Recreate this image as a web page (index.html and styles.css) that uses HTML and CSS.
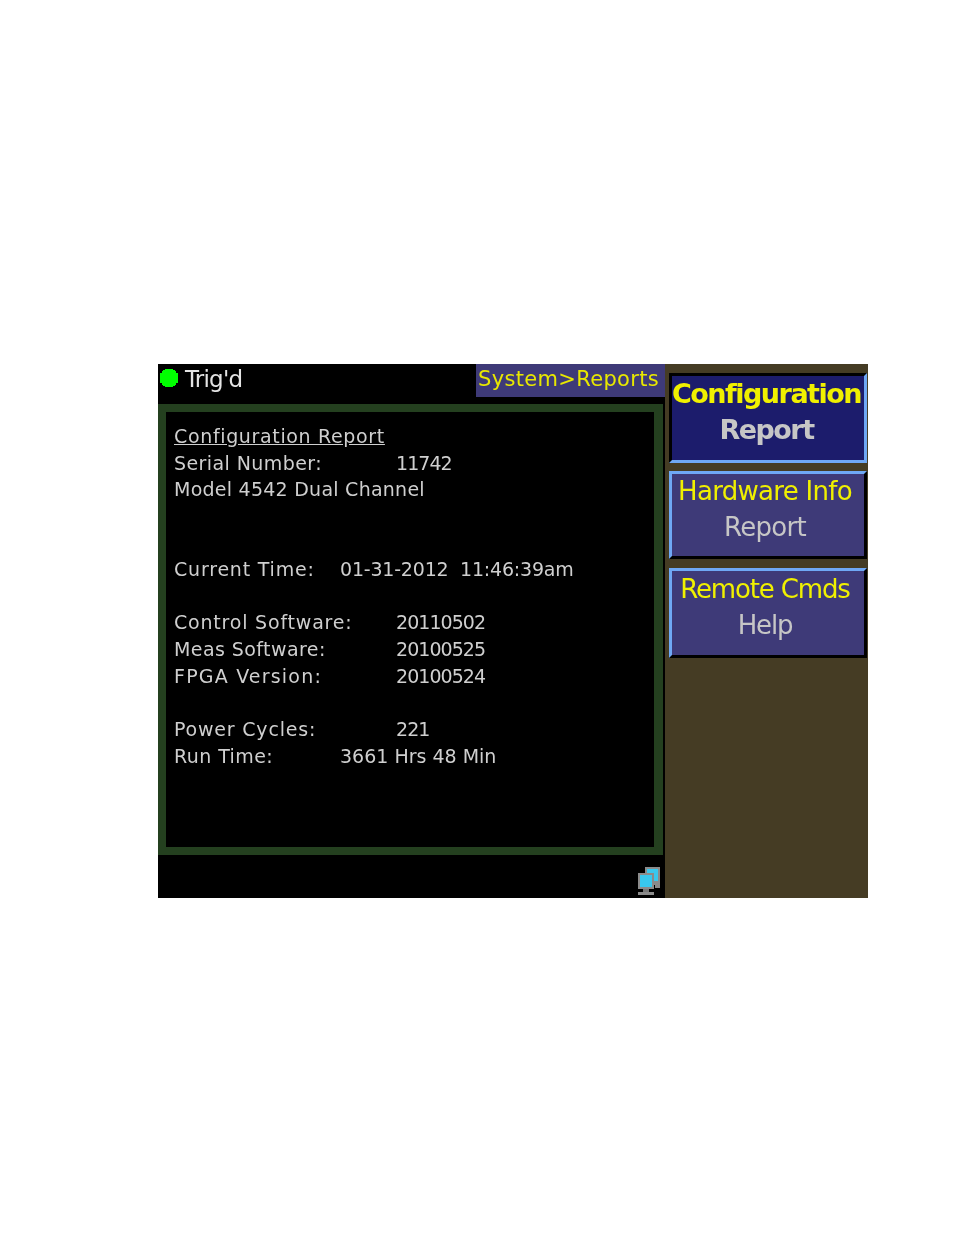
FILE: index.html
```html
<!DOCTYPE html>
<html lang="en">
<head>
<meta charset="utf-8">
<title>System Reports</title>
<link rel="stylesheet" href="styles.css">
</head>
<body>
<div class="screen">
  <main class="display">
    <header class="topbar">
      <div class="status">
        <svg class="led" width="20" height="22" viewBox="0 0 20 22"><path d="M6 1h8v1h2v1h1v2h2v10h-2v2h-1v1h-2v1H6v-1H4v-1H3v-2H1V5h2V3h1V2h2z" fill="#00ff00"/></svg>
        <span>Trig'd</span>
      </div>
      <div class="crumb">System&gt;Reports</div>
    </header>
    <section class="frame">
      <div class="report">
        <div class="row title"><u>Configuration Report</u></div>
        <div class="row"><span class="label sp-serial">Serial Number:</span><span class="val far">11742</span></div>
        <div class="row sp-model">Model 4542 Dual Channel</div>
        <div class="row"></div>
        <div class="row"></div>
        <div class="row"><span class="label sp-wide">Current Time:</span><span class="val pre">01-31-2012  11:46:39am</span></div>
        <div class="row"></div>
        <div class="row"><span class="label sp-wide">Control Software:</span><span class="val far">20110502</span></div>
        <div class="row"><span class="label sp-serial">Meas Software:</span><span class="val far">20100525</span></div>
        <div class="row"><span class="label sp-fpga">FPGA Version:</span><span class="val far">20100524</span></div>
        <div class="row"></div>
        <div class="row"><span class="label sp-wide">Power Cycles:</span><span class="val far">221</span></div>
        <div class="row"><span class="label sp-serial">Run Time:</span><span class="val run">3661 Hrs 48 Min</span></div>
      </div>
    </section>
    <footer class="bottombar">
      <svg width="26" height="30" viewBox="0 0 26 30">
        <path d="M8 1h15v21h-5v-3H8z" fill="#8b8b8b"/>
        <rect x="10" y="3" width="11" height="12" fill="#38c8ee"/>
        <rect x="1" y="7" width="16" height="16" fill="#8b8b8b"/>
        <rect x="3" y="9" width="12" height="12" fill="#38c8ee"/>
        <rect x="6" y="23" width="6" height="3" fill="#777"/>
        <rect x="1" y="26" width="16" height="3" fill="#8b8b8b"/>
      </svg>
    </footer>
  </main>
  <aside class="keys">
    <button class="key active"><span class="k1">Configuration</span><span class="k2">Report</span></button>
    <button class="key hw"><span class="k1">Hardware Info</span><span class="k2">Report</span></button>
    <button class="key third"><span class="k1">Remote Cmds</span><span class="k2">Help</span></button>
  </aside>
</div>
</body>
</html>
```
FILE: styles.css
```css
html, body { margin: 0; padding: 0; background: #fff; }
body { width: 954px; height: 1235px; padding-top: 364px; padding-left: 158px; box-sizing: border-box; font-family: "DejaVu Sans", sans-serif; }
.screen { display: flex; width: 710px; height: 534px; background: #453c24; filter: blur(0.35px); }
.display { flex: none; width: 507px; background: #000; display: flex; flex-direction: column; }
.topbar { height: 40px; display: flex; justify-content: space-between; align-items: flex-start; }
.status { display: flex; align-items: center; height: 30px; color: #e4e4e4; font-size: 23px; letter-spacing: -0.8px; }
.led { margin: 0 6px 0 1px; }
.crumb { width: 189px; height: 33px; box-sizing: border-box; background: #3e3a78; color: #e8e800; font-size: 21px; letter-spacing: 0.33px; padding-left: 2px; line-height: 31px; white-space: nowrap; overflow: hidden; }
.frame { width: 505px; height: 451px; box-sizing: border-box; border: 8px solid #24401f; border-right-width: 9px; background: #000; padding: 11px 8px; }
.report { color: #cfcfcf; font-size: 19px; }
.row { height: 26.65px; line-height: 26.65px; display: flex; white-space: nowrap; }
.title { letter-spacing: 0.65px; }
.sp-model { letter-spacing: 0.25px; }
.label { width: 166px; flex: none; }
.sp-serial { letter-spacing: 0.42px; }
.sp-wide { letter-spacing: 0.8px; }
.sp-fpga { letter-spacing: 1.2px; }
.val { letter-spacing: -0.2px; }
.val.far { margin-left: 56px; letter-spacing: -0.95px; }
.val.pre { white-space: pre; }
.val.run { letter-spacing: 0; }
.bottombar { flex: 1; display: flex; justify-content: flex-end; align-items: flex-end; padding: 0 2px 2px 0; }
.keys { flex: 1; min-width: 0; display: flex; flex-direction: column; padding: 9px 1px 0 4px; gap: 8px; }
.key { display: flex; flex-direction: column; align-items: center; justify-content: center; gap: 4px; height: 88px; padding: 0 6px 12px 0; box-sizing: border-box; background: #3e3a78; border: 3px solid; border-color: #6fa8f5 #000 #000 #6fa8f5; font-family: "DejaVu Sans", sans-serif; font-size: 26px; letter-spacing: -0.7px; }
.key.third { height: 90px; margin-top: 1px; letter-spacing: -1.15px; }
.key.active { height: 90px; padding-right: 3px; background: #1c1c6c; border-color: #000 #6fa8f5 #6fa8f5 #000; font-weight: 700; font-size: 27px; letter-spacing: -1.5px; }
.k1 { color: #f0f000; line-height: 32px; white-space: nowrap; }
.k2 { color: #c6c6c6; line-height: 32px; }
```
